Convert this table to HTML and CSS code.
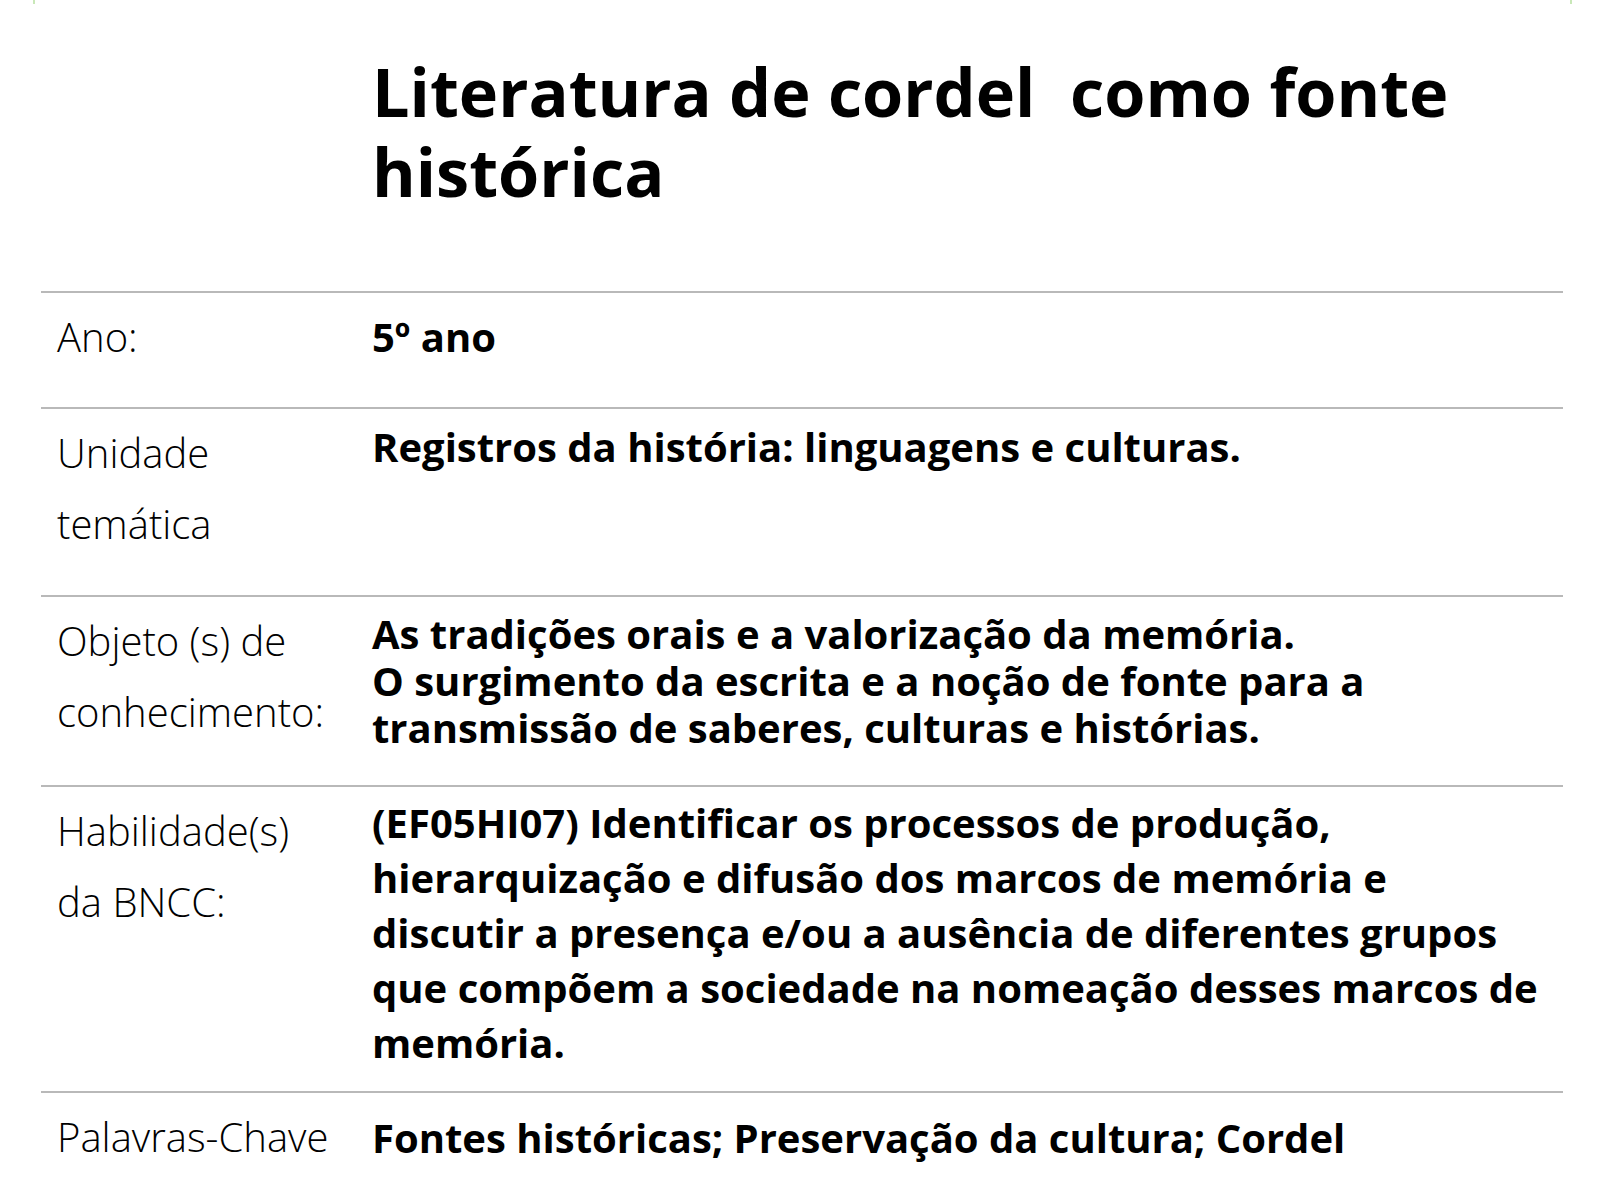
FILE: index.html
```html
<!DOCTYPE html>
<html lang="pt-BR">
<head>
<meta charset="utf-8">
<title>Literatura de cordel como fonte histórica</title>
<link rel="stylesheet" href="styles.css">
</head>
<body>
<div class="frame-edge"></div>
<main class="sheet">
  <h1 class="title">Literatura de cordel&nbsp; como fonte histórica</h1>
  <section class="table">
    <div class="row row-ano">
      <div class="label">Ano:</div>
      <div class="value v-ano">5º ano</div>
    </div>
    <div class="row row-unidade">
      <div class="label">Unidade temática</div>
      <div class="value v-unidade">Registros da história: linguagens e culturas.</div>
    </div>
    <div class="row row-objeto">
      <div class="label">Objeto (s) de conhecimento:</div>
      <div class="value v-objeto">
        <p>As tradições orais e a valorização da memória.</p>
        <p>O surgimento da escrita e a noção de fonte para a transmissão de saberes, culturas e histórias.</p>
      </div>
    </div>
    <div class="row row-hab">
      <div class="label">Habilidade(s) da BNCC:</div>
      <div class="value v-hab">(EF05HI07) Identificar os processos de produção, hierarquização e difusão dos marcos de memória e discutir a presença e/ou a ausência de diferentes grupos que compõem a sociedade na nomeação desses marcos de memória.</div>
    </div>
    <div class="row row-palavras">
      <div class="label">Palavras-Chave</div>
      <div class="value v-palavras">Fontes históricas; Preservação da cultura; Cordel</div>
    </div>
  </section>
</main>
</body>
</html>
```

FILE: styles.css
```css
html, body {
  margin: 0;
  padding: 0;
  background: #ffffff;
}
body {
  font-family: "Open Sans", "Noto Sans", sans-serif;
  color: #000000;
  overflow: hidden;
  height: 1200px;
}
.frame-edge {
  height: 4px;
  margin-left: 33px;
  width: 1535px;
  border-left: 2px solid #c9e8b8;
  border-right: 2px solid #c9e8b8;
  margin-bottom: -4px;
}
.sheet {
  margin-left: 41px;
  width: 1522px;
}
.title {
  margin: 0;
  padding: 52px 0 0 331px;
  font-size: 66.6px;
  line-height: 80px;
  font-weight: 700;
  height: 291px;
  box-sizing: border-box;
}
.row {
  display: grid;
  grid-template-columns: 331px 1fr;
  border-top: 2px solid #b9b9b9;
}
.label {
  padding: 8px 0 0 16px;
  width: 278px;
  font-size: 40px;
  line-height: 71px;
  font-weight: 300;
}
.value {
  font-size: 40px;
  font-weight: 700;
  padding-right: 20px;
}
.value p { margin: 0; }
.v-ano { padding-top: 9px; line-height: 70px; }
.v-unidade { padding-top: 10px; line-height: 55px; }
.v-objeto { padding-top: 13px; line-height: 47px; }
.v-hab { padding-top: 8px; line-height: 55px; }
.v-palavras { padding-top: 10px; line-height: 70px; }
.row-ano { padding-bottom: 35px; }
.row-unidade { padding-bottom: 36px; }
.row-objeto { padding-bottom: 34px; }
.row-hab { padding-bottom: 21px; }
.row-palavras { padding-bottom: 30px; }
```
